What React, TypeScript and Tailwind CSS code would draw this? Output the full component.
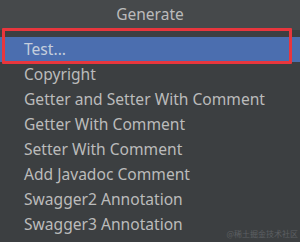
import React from "react";

const items = [
  "Test...",
  "Copyright",
  "Getter and Setter With Comment",
  "Getter With Comment",
  "Setter With Comment",
  "Add Javadoc Comment",
  "Swagger2 Annotation",
  "Swagger3 Annotation",
];

export default function App() {
  return (
    <div
      className="relative w-[300px] h-[242px] overflow-hidden bg-[#3c3f41]"
      style={{ fontFamily: '"Noto Sans", "Open Sans", sans-serif' }}
    >
      <div className="h-[30px] bg-[#46494b] flex items-center justify-center text-[15.5px] text-[#bbbbbb]">
        Generate
      </div>
      <div className="pt-[7px] flex flex-col">
        {items.map((t, i) => (
          <div
            key={t}
            className={
              i === 0
                ? "h-[25px] flex items-center pl-[24px] text-[15.6px] bg-[#4b6eaf] text-[#c5cedd]"
                : "h-[25px] flex items-center pl-[24px] text-[15.6px] text-[#bbbbbb]"
            }
          >
            {t}
          </div>
        ))}
      </div>
      <div className="absolute left-[2px] top-[28px] w-[290px] h-[36px] border-[3px] border-[#e8363d] rounded-[1px]" />
      <div
        className="absolute right-[2px] bottom-[2px] text-[8px] text-[#5d6063]"
        style={{ fontFamily: '"Noto Sans CJK SC", sans-serif' }}
      >
        @稀土掘金技术社区
      </div>
    </div>
  );
}
